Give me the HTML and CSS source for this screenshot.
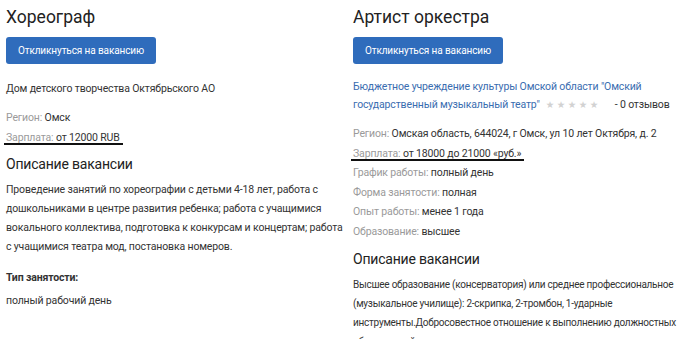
FILE: index.html
```html
<!DOCTYPE html>
<html lang="ru">
<head>
<meta charset="utf-8">
<link rel="stylesheet" href="styles.css">
</head>
<body>
<div class="page">
  <section class="col col-left">
    <h1 class="title">Хореограф</h1>
    <a class="btn" href="#">Откликнуться на вакансию</a>
    <p class="org">Дом детского творчества Октябрьского АО</p>
    <ul class="info">
      <li><span class="lbl">Регион:</span> Омск</li>
      <li class="mark"><span class="lbl">Зарплата:</span> от 12000 RUB</li>
    </ul>
    <h2 class="sub">Описание вакансии</h2>
    <p class="desc">Проведение занятий по хореографии с детьми 4-18 лет, работа с дошкольниками в центре развития ребенка; работа с учащимися вокального коллектива, подготовка к конкурсам и концертам; работа с учащимися театра мод, постановка номеров.</p>
    <h4 class="kind">Тип занятости:</h4>
    <p class="kind-val">полный рабочий день</p>
  </section>
  <section class="col col-right">
    <h1 class="title">Артист оркестра</h1>
    <a class="btn" href="#">Откликнуться на вакансию</a>
    <p class="org org-link"><a href="#">Бюджетное учреждение культуры Омской области "Омский государственный музыкальный театр"</a><span class="stars">★★★★★</span><span class="reviews">- 0 отзывов</span></p>
    <ul class="info">
      <li><span class="lbl">Регион:</span> Омская область, 644024, г Омск, ул 10 лет Октября, д. 2</li>
      <li class="mark"><span class="lbl">Зарплата:</span> от 18000 до 21000 «руб.»</li>
      <li><span class="lbl">График работы:</span> полный день</li>
      <li><span class="lbl">Форма занятости:</span> полная</li>
      <li><span class="lbl">Опыт работы:</span> менее 1 года</li>
      <li><span class="lbl">Образование:</span> высшее</li>
    </ul>
    <h2 class="sub">Описание вакансии</h2>
    <p class="desc desc-compact">Высшее образование (консерватория) или среднее профессиональное (музыкальное училище): 2-скрипка, 2-тромбон, 1-ударные инструменты.Добросовестное отношение к выполнению должностных обязанностей.</p>
  </section>
</div>
</body>
</html>
```
FILE: styles.css
```css
html, body {
  margin: 0;
  padding: 0;
  background: #fff;
}
body {
  font-family: Roboto, "Noto Sans", sans-serif;
  font-size: 10.5px;
  letter-spacing: -0.15px;
  color: #333;
  overflow: hidden;
}
.page {
  display: grid;
  grid-template-columns: 347px 347px;
  padding-left: 6px;
}
.col {
  display: flex;
  flex-direction: column;
  align-items: flex-start;
}
.col-left { padding-right: 4px; }
.col-right { padding-right: 3px; }
.title {
  margin: 4px 0 0;
  font-size: 17.5px;
  font-weight: 400;
  letter-spacing: 0;
  color: #222;
  line-height: 26px;
}
.btn {
  margin-top: 7px;
  display: block;
  width: 150px;
  height: 27px;
  line-height: 27px;
  text-align: center;
  background: #2f6cbc;
  border-radius: 3px;
  color: #fff;
  text-decoration: none;
  font-size: 10px;
  letter-spacing: -0.1px;
}
.org {
  margin: 14px 0 0;
  line-height: 18px;
}
.col-left .org { margin-top: 16px; }
.org-link a {
  color: #3a6db0;
  text-decoration: none;
}
.stars {
  font-family: "DejaVu Sans", sans-serif;
  color: #d2d2d2;
  font-size: 9.5px;
  letter-spacing: 2.5px;
  margin-left: 6px;
}
.reviews { margin-left: 14px; }
.info {
  list-style: none;
  margin: 10px 0 0;
  padding: 0;
}
.info li {
  line-height: 19.6px;
}
.lbl { color: #9a9a9a; }
.mark {
  position: relative;
  width: fit-content;
}
.mark::after {
  content: "";
  position: absolute;
  left: -2px;
  right: -3px;
  bottom: 2px;
  height: 2px;
  background: #111;
}
.sub {
  margin: 7px 0 0;
  font-size: 14px;
  font-weight: 400;
  letter-spacing: -0.2px;
  color: #222;
  line-height: 20px;
}
.desc {
  margin: 6.5px 0 0;
  line-height: 19px;
}
.col-left .desc { margin-top: 5.5px; }
.desc-compact {
  font-size: 10px;
  letter-spacing: -0.25px;
  width: 328px;
}
.kind {
  margin: 13.5px 0 0;
  font-weight: 700;
  font-size: 10.5px;
  line-height: 18px;
}
.kind-val {
  margin: 5px 0 0;
  line-height: 18px;
}
```
